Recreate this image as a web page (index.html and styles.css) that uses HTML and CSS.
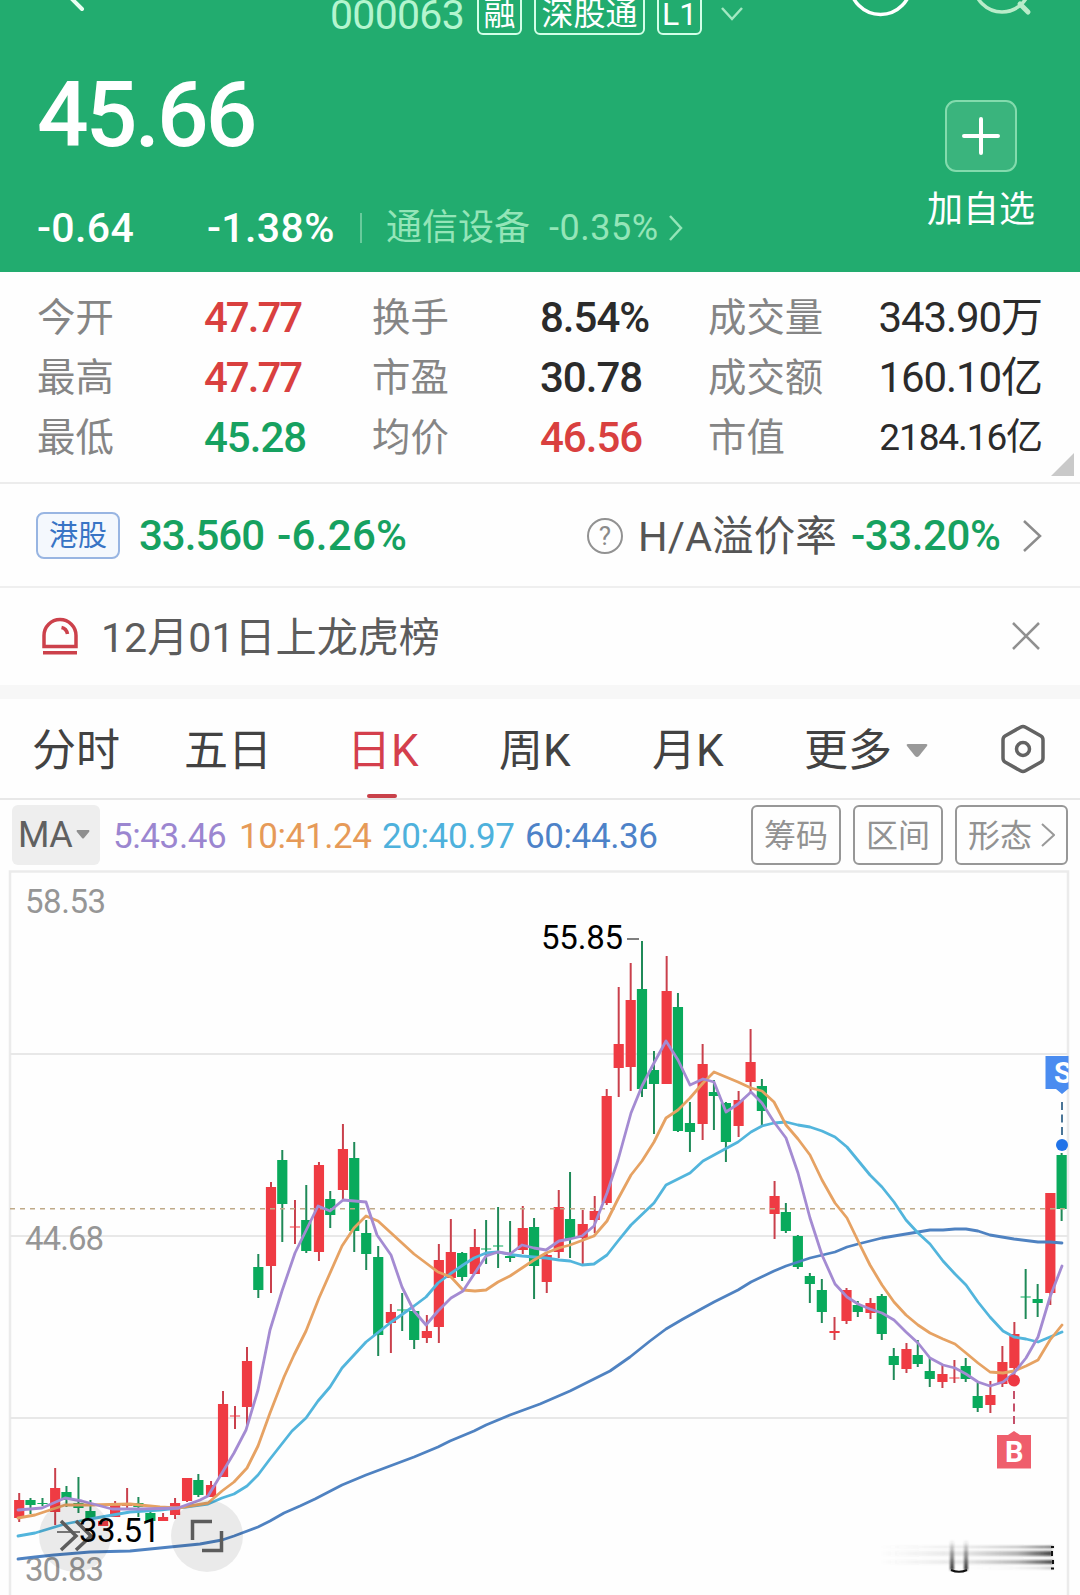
FILE: index.html
```html
<!DOCTYPE html>
<html lang="zh-CN">
<head>
    <meta charset="UTF-8">
    <meta name="viewport" content="width=device-width, initial-scale=1.0">
    <title>000063</title>
    <link rel="stylesheet" href="styles.css">
</head>
<body>
    <header class="header">
        <div class="topbar">
            <svg class="back" width="40" height="46" viewBox="60 -8 40 46"><path d="M66-7L82 9"/></svg>
            <span class="code">000063</span>
            <span class="badge">融</span>
            <span class="badge badge-wide">深股通</span>
            <span class="badge">L1</span>
            <svg class="drop" width="24" height="16" viewBox="0 0 24 16"><path d="M2 2L12 13L22 2"/></svg>
            <svg class="actions" width="190" height="46" viewBox="845 -8 190 46">
                <circle cx="881.5" cy="-16" r="30.5" stroke="#fff"/>
                <g stroke="#b9ecc9"><circle cx="1003" cy="-16" r="28"/><path d="M1021 4L1029 12" stroke-width="5"/></g>
            </svg>
        </div>
        <div class="quote">
            <div class="quote-main">
                <div class="price">45.66</div>
                <div class="change">
                    <span class="diff">-0.64</span>
                    <span class="pct">-1.38%</span>
                    <i class="divider"></i>
                    <span class="sector">通信设备</span>
                    <span class="sector-pct">-0.35%</span>
                    <svg width="16" height="26" viewBox="0 0 16 26"><path d="M2 1L13 13L2 25"/></svg>
                </div>
            </div>
            <div class="add">
                <div class="add-box">
                    <svg width="40" height="40" viewBox="0 0 40 40"><path d="M20 3V37M3 20H37"/></svg>
                </div>
                <span>加自选</span>
            </div>
        </div>
    </header>

    <section class="stats">
        <span class="label">今开</span><span class="val up tight">47.77</span>
        <span class="label">换手</span><span class="val">8.54%</span>
        <span class="label">成交量</span><span class="val right">343.90万</span>
        <span class="label">最高</span><span class="val up tight">47.77</span>
        <span class="label">市盈</span><span class="val">30.78</span>
        <span class="label">成交额</span><span class="val right">160.10亿</span>
        <span class="label">最低</span><span class="val down">45.28</span>
        <span class="label">均价</span><span class="val up">46.56</span>
        <span class="label">市值</span><span class="val right small">2184.16亿</span>
        <i class="corner"></i>
    </section>

    <section class="hk">
        <span class="hk-tag">港股</span>
        <span class="hk-price">33.560</span>
        <span class="hk-pct">-6.26%</span>
        <span class="help">?</span>
        <span class="premium">H/A溢价率</span>
        <span class="premium-pct">-33.20%</span>
        <svg class="arrow" width="20" height="34" viewBox="0 0 20 34"><path d="M2 2L18 17L2 32"/></svg>
    </section>

    <section class="notice">
        <svg class="siren" width="38" height="38" viewBox="0 0 38 38">
            <path d="M3 29.500V18.500a16 16 0 0 1 32 0V29.500Z"/><path d="M20.500 10.500q5 1 6 6.500M2 35.800H36"/>
        </svg>
        <span class="notice-text">12月01日上龙虎榜</span>
        <svg class="close" width="28" height="28" viewBox="0 0 28 28"><path d="M1 1L27 27M27 1L1 27"/></svg>
    </section>

    <nav class="tabs">
        <span class="tab">分时</span>
        <span class="tab">五日</span>
        <span class="tab active">日K</span>
        <span class="tab">周K</span>
        <span class="tab">月K</span>
        <span class="tab more">更多</span>
        <svg class="caret" width="22" height="14" viewBox="0 0 22 14"><path d="M2 0H20Q22 0 21 2L13 12Q11 14 9 12L1 2Q0 0 2 0Z"/></svg>
        <svg class="setting" width="46" height="50" viewBox="0 0 46 50">
            <path d="M20.500 3.200Q23 1.800 25.500 3.200L41 12Q43 13.200 43 16V34Q43 36.800 41 38L25.500 46.800Q23 48.200 20.500 46.800L5 38Q3 36.800 3 34V16Q3 13.200 5 12Z"/>
            <circle cx="23" cy="25" r="6.500"/>
        </svg>
    </nav>

    <section class="ma-bar">
        <span class="ma-select">MA<svg width="14" height="9" viewBox="0 0 14 9"><path d="M1 0H13Q14 1 13 2L8 8Q7 9 6 8L1 2Q0 1 1 0Z"/></svg></span>
        <span class="ma ma5">5:43.46</span>
        <span class="ma ma10">10:41.24</span>
        <span class="ma ma20">20:40.97</span>
        <span class="ma ma60">60:44.36</span>
        <span class="btn">筹码</span>
        <span class="btn">区间</span>
        <span class="btn btn-wide">形态<svg width="14" height="26" viewBox="0 0 14 26"><path d="M1 2L13 13L1 24"/></svg></span>
    </section>

    <svg class="chart" width="1080" height="725" viewBox="0 870 1080 725">
        <defs>
            <clipPath id="plot"><rect x="10" y="870" width="1058.500" height="725"/></clipPath>
            <linearGradient id="fadeDown" x1="0" y1="0" x2="0" y2="1"><stop offset="0" stop-color="#333" stop-opacity="0"/><stop offset="1" stop-color="#333"/></linearGradient>
            <linearGradient id="fadeRight"><stop offset="0" stop-color="#555" stop-opacity="0"/><stop offset=".5" stop-color="#555" stop-opacity=".15"/><stop offset=".8" stop-color="#444" stop-opacity=".4"/><stop offset="1" stop-color="#333" stop-opacity=".9"/></linearGradient>
            <filter id="soft" x="-10%" y="-30%" width="120%" height="160%"><feGaussianBlur stdDeviation="1.1"/></filter>
        </defs>
        <rect class="frame" x="10" y="871.500" width="1058" height="760"/>
        <path class="grid" d="M10 1054H1068M10 1236H1068M10 1418H1068"/>
        <g class="axis">
            <text x="25" y="913" textLength="81">58.53</text>
            <text x="25" y="1250" textLength="79">44.68</text>
            <text x="25" y="1581" textLength="79">30.83</text>
        </g>
        <g id="candles"></g>
        <path class="last" d="M10 1208.700H1068"/>
        <g id="lines"></g>

        <path class="tick" d="M627 939H639M57 1532H80"/>
        <text class="peak" x="541" y="949" textLength="82">55.85</text>
        <g class="tools">
            <circle cx="75" cy="1536" r="36"/>
            <circle cx="207" cy="1536" r="36"/>
            <path d="M61 1521L76 1536L61 1550M76 1521L91 1536L76 1550"/>
            <path d="M192.500 1540V1521.500H212M202 1550.500H221.500V1531"/>
        </g>
        <text class="peak" x="79" y="1542" textLength="81">33.51</text>

        <!-- buy and sell marks -->
        <g clip-path="url(#plot)">
            <path fill="#4a8cf0" d="M1045.500 1056H1080V1089H1068L1062 1094L1056 1089H1045.500Z"/>
            <text class="mark" x="1054" y="1083">S</text>
        </g>
        <path d="M1062 1102V1138" stroke="#4a7597" stroke-width="2" stroke-dasharray="8 4.500"/>
        <circle cx="1062" cy="1145" r="6" fill="#2173e8"/>
        <path fill="#ef5e6c" d="M997 1435H1008L1014 1431L1020 1435H1031V1468.500H997Z"/>
        <text class="mark" x="1005" y="1462">B</text>
        <path d="M1014 1391V1427" stroke="#c5516a" stroke-width="2" stroke-dasharray="8 4.500"/>
        <circle cx="1014" cy="1380.500" r="6" fill="#ee3843"/>

        <g filter="url(#soft)">
            <rect x="880" y="1551" width="172" height="5" fill="url(#fadeRight)"/>
            <rect x="880" y="1546" width="173" height="2" fill="url(#fadeRight)"/>
            <rect x="880" y="1560" width="173" height="4" fill="url(#fadeRight)"/>
            <rect x="970" y="1567" width="83" height="2" fill="url(#fadeRight)" opacity=".4"/>
            <rect x="950" y="1540" width="4" height="30" fill="url(#fadeDown)"/>
            <rect x="964" y="1540" width="4" height="30" fill="url(#fadeDown)"/>
        </g>
        <path d="M951 1570Q959 1573.500 967 1570M1052 1551V1556M1053 1560V1564" fill="none" stroke="#111" stroke-width="2"/>
        <path d="M1051 1547H1054M1051 1568.500H1054" stroke="#111" stroke-width="2"/>
    </svg>

    <script src="chart.js"></script>
</body>
</html>
```
FILE: styles.css
```css
* {
    box-sizing: border-box;
}

body {
    margin: 0;
    width: 1080px;
    height: 1595px;
    overflow: hidden;
    background: #fefefe;
    color: #2b2b2b;
    font-family: Roboto, "Noto Sans CJK SC", sans-serif;
}

svg {
    display: block;
    flex: none;
    fill: none;
}

span {
    white-space: nowrap;
}

.header {
    height: 271.5px;
    background: #22ac6f;
    color: #fff;
    overflow: hidden;
}

.topbar {
    display: flex;
    align-items: center;
    height: 46px;
    margin-top: -8px;
    padding-left: 60px;
}

.back {
    stroke: #e8fff2;
    stroke-width: 4;
    stroke-linecap: round;
}

.code {
    width: 147px;
    margin-left: 230px;
    color: #b4f5cf;
    font-size: 41px;
    line-height: 44px;
    letter-spacing: -0.7px;
}

.badge {
    flex: none;
    width: 45px;
    height: 42px;
    margin: -2px 12px 0 0;
    border: 2px solid #d3ffe8;
    border-radius: 6px;
    font-size: 32px;
    line-height: 39px;
    text-align: center;
}

.badge-wide {
    width: 111px;
}

.drop {
    margin-left: 6px;
    margin-bottom: 2px;
    stroke: #a3e8c2;
    stroke-width: 2.5;
}

.actions {
    margin-left: 100px;
    stroke-width: 3.5;
    stroke-linecap: round;
}

.quote {
    display: flex;
    justify-content: space-between;
}

.quote-main {
    padding: 31px 0 0 37px;
}

.price {
    height: 92px;
    font-size: 91px;
    font-weight: 500;
    line-height: 92px;
    letter-spacing: -2.9px;
}

.change {
    display: flex;
    align-items: center;
    height: 44px;
    margin-top: 45px;
    font-size: 41px;
    line-height: 44px;
}

.diff {
    width: 170px;
    font-weight: 500;
    letter-spacing: 0.4px;
}

.pct {
    width: 153px;
    font-weight: 500;
    letter-spacing: 0.4px;
}

.divider {
    width: 2px;
    height: 30px;
    margin-right: 24px;
    background: #69cb9c;
}

.sector {
    width: 163px;
    color: #94e5b8;
    font-size: 36px;
}

.sector-pct {
    width: 119px;
    color: #94e5b8;
    font-size: 36px;
    letter-spacing: 0.5px;
}

.change svg {
    stroke: #94e5b8;
    stroke-width: 2.5;
}

.add {
    display: flex;
    flex-direction: column;
    align-items: center;
    width: 198px;
    padding-top: 62px;
    font-size: 36px;
    line-height: 42px;
}

.add-box {
    display: flex;
    align-items: center;
    justify-content: center;
    width: 72px;
    height: 72px;
    margin-bottom: 17px;
    border: 2px solid #83dbad;
    border-radius: 11px;
    background: #3ab47d;
}

.add-box svg {
    stroke: #fff;
    stroke-width: 4;
    stroke-linecap: round;
}

.stats {
    position: relative;
    display: grid;
    grid-template-columns: 167px 168px 168px 168px 130px 204px;
    grid-auto-rows: 60px;
    height: 212px;
    padding: 16px 0 0 37px;
    border-bottom: 2px solid #ececec;
    line-height: 60px;
}

.label {
    color: #858585;
    font-size: 38.4px;
    line-height: 59px;
}

.val {
    font-size: 42px;
    font-weight: 500;
    letter-spacing: -1px;
}

.right {
    text-align: right;
    font-weight: 400;
    letter-spacing: -1.1px;
}

.small {
    font-size: 37px;
}

.tight {
    letter-spacing: -2px;
}

.up {
    color: #d9403f;
}

.down {
    color: #16a160;
}

.corner {
    position: absolute;
    right: 6px;
    bottom: 6px;
    border-left: 23px solid transparent;
    border-bottom: 23px solid #c9c9c9;
}

.hk {
    display: flex;
    align-items: center;
    height: 104px;
    padding: 2px 38px 0 36px;
    border-bottom: 2px solid #efefef;
    font-size: 42px;
    line-height: 50px;
}

.hk-tag {
    width: 84px;
    height: 47px;
    margin-right: 19px;
    border: 2px solid #98b5e2;
    border-radius: 8px;
    background: #f4f8fd;
    color: #3874c5;
    font-size: 29px;
    line-height: 45px;
    text-align: center;
}

.hk-price {
    width: 138px;
    color: #16a160;
    font-weight: 500;
    letter-spacing: -1px;
}

.hk-pct {
    width: 310px;
    color: #16a160;
    font-weight: 500;
    letter-spacing: 0.3px;
}

.help {
    width: 36px;
    height: 36px;
    margin-right: 14px;
    border: 2.5px solid #929292;
    border-radius: 50%;
    color: #8a8a8a;
    font-size: 26px;
    line-height: 32px;
    text-align: center;
}

.premium {
    width: 214px;
    padding: 2px 0 0 1px;
    color: #555;
    font-size: 41.5px;
    letter-spacing: 0.1px;
}

.premium-pct {
    color: #16a160;
    font-weight: 500;
    letter-spacing: -0.4px;
}

.arrow {
    margin-left: auto;
    stroke: #8c8c8c;
    stroke-width: 2.5;
}

.notice {
    display: flex;
    align-items: center;
    height: 111px;
    padding: 0 40px 0 41px;
    border-bottom: 14px solid #f7f7f7;
}

.siren {
    stroke: #cc414b;
    stroke-width: 3.5;
}

.notice-text {
    margin-left: 22px;
    padding-top: 3px;
    color: #5c5c5c;
    font-size: 41.1px;
    line-height: 60px;
}

.close {
    margin-left: auto;
    stroke: #909090;
    stroke-width: 2.5;
}

.tabs {
    display: flex;
    align-items: center;
    height: 101px;
    padding-left: 32px;
    border-bottom: 2px solid #e8e8e8;
    color: #424242;
    font-size: 44px;
    line-height: 105px;
}

.tab {
    width: 152px;
    height: 99px;
}

.tab.active {
    position: relative;
    width: 160px;
    padding-left: 11px;
    color: #d43f4c;
}

.tab.active::after {
    content: "";
    position: absolute;
    left: 31px;
    bottom: 0;
    width: 30px;
    height: 4px;
    border-radius: 2px;
    background: #c9414a;
}

.tab.active + .tab {
    margin-left: 3px;
    margin-right: 1px;
}

.tab.more {
    width: 101px;
}

.caret {
    margin: 5px 72px 0 1px;
    fill: #999;
}

.setting {
    margin-top: 2px;
    stroke: #636363;
    stroke-width: 3.5;
}

.ma-bar {
    display: flex;
    align-items: center;
    height: 70.5px;
    padding: 1px 0 0 12px;
    font-size: 35px;
    line-height: 60px;
}

.ma-select {
    display: flex;
    align-items: center;
    width: 88px;
    height: 60px;
    margin-right: 13px;
    padding-left: 6px;
    border-radius: 6px;
    background: #eee;
    color: #606060;
    font-size: 36px;
    letter-spacing: -0.5px;
}

.ma-select svg {
    margin-left: 4px;
    margin-bottom: 2px;
    fill: #8f8f8f;
}

.ma {
    width: 143px;
    padding-top: 4px;
    letter-spacing: -0.4px;
}

.ma5 {
    width: 126px;
    color: #9b86d0;
}

.ma10 {
    color: #e69a58;
}

.ma20 {
    color: #4eb1dc;
}

.ma60 {
    width: 226px;
    color: #4d82c8;
}

.btn {
    flex: none;
    width: 90px;
    height: 60px;
    margin-right: 12px;
    border: 2px solid #979797;
    border-radius: 6px;
    color: #929292;
    font-size: 32px;
    line-height: 58px;
    text-align: center;
}

.btn-wide {
    display: flex;
    justify-content: space-between;
    width: 113px;
    padding: 0 11px;
}

.btn svg {
    margin-top: 15px;
    stroke: #999;
    stroke-width: 2;
}

.frame {
    stroke: #ebebeb;
    stroke-width: 2.5;
}

.grid {
    stroke: #e8e8e8;
    stroke-width: 2;
}

.axis {
    fill: #969696;
    font-size: 33px;
}

.last {
    stroke: #bfa987;
    stroke-width: 1.6;
    stroke-dasharray: 5 5;
}

.peak {
    fill: #000;
    font-size: 33px;
}

.tick {
    stroke: #555;
    stroke-width: 1.6;
}

.tools circle {
    fill: rgba(0, 0, 0, 0.08);
}

.tools path {
    stroke: #5c5c5c;
    stroke-width: 3.5;
}

.mark {
    fill: #fff;
    font-size: 29px;
    font-weight: 700;
}

.ma-line {
    stroke-width: 2.8;
    stroke-linejoin: round;
    stroke-linecap: round;
}
```
FILE: chart.js
```js
// each candle: color, high, body top, body bottom, low
const candles = [
    ['r', 1493, 1500, 1518, 1522], ['g', 1498, 1500, 1505, 1514], ['g', 1498, 1503, 1504, 1506],
    ['r', 1468, 1488, 1512, 1525], ['g', 1486, 1492, 1500, 1507], ['g', 1477, 1503, 1508, 1513],
    ['g', 1500, 1511, 1519, 1521], ['r', 1521, 1521, 1526, 1526], ['r', 1501, 1505, 1517, 1517],
    ['r', 1488, 1505, 1506, 1508], ['g', 1497, 1503, 1507, 1517], ['g', 1512, 1513, 1521, 1521],
    ['r', 1513, 1517, 1521, 1521], ['r', 1498, 1503, 1515, 1519], ['r', 1478, 1478, 1501, 1502],
    ['g', 1474, 1480, 1495, 1497], ['r', 1481, 1485, 1497, 1497], ['r', 1391, 1404, 1477, 1477],
    ['r', 1406, 1415.5, 1416.5, 1429], ['r', 1347, 1361, 1407, 1425], ['g', 1254, 1267, 1290, 1298],
    ['r', 1182, 1187, 1266, 1293], ['g', 1150, 1160, 1204, 1242], ['r', 1200, 1226.5, 1227.5, 1244],
    ['g', 1185, 1220, 1251, 1253], ['r', 1162, 1165, 1252, 1261], ['g', 1191, 1199, 1215, 1228],
    ['r', 1124, 1149, 1190, 1199], ['g', 1142, 1158, 1231, 1252], ['g', 1220, 1233, 1254, 1270],
    ['g', 1246, 1257, 1335, 1356], ['r', 1304, 1312, 1323, 1353], ['g', 1293, 1309.5, 1310.5, 1331],
    ['g', 1310, 1311, 1340, 1349], ['r', 1315, 1331, 1338, 1343], ['r', 1244, 1260, 1327, 1343],
    ['r', 1219, 1252, 1278, 1278], ['g', 1252, 1253, 1277, 1281], ['r', 1229, 1247, 1274, 1274],
    ['g', 1220, 1248.5, 1249.5, 1264], ['g', 1207, 1245.5, 1246.5, 1268], ['g', 1221, 1256, 1258, 1262],
    ['r', 1206, 1228, 1250, 1254], ['g', 1218, 1227, 1266, 1299], ['r', 1254, 1255, 1282, 1293],
    ['r', 1190, 1207, 1252, 1258], ['g', 1172, 1219, 1239, 1258], ['r', 1210, 1224, 1238, 1264],
    ['r', 1196, 1211, 1220, 1233], ['r', 1089, 1096, 1203, 1205], ['r', 987, 1044, 1068, 1097],
    ['r', 963, 1000, 1067, 1091], ['g', 941, 989, 1089, 1097], ['g', 1051, 1070, 1084, 1134],
    ['r', 956, 991, 1084, 1084], ['g', 993, 1007, 1131, 1132], ['g', 1102, 1123, 1132, 1152],
    ['r', 1044, 1064, 1124, 1140], ['g', 1080, 1092, 1096, 1130], ['g', 1102, 1103, 1142, 1162],
    ['r', 1091, 1100, 1126, 1137], ['r', 1029, 1062, 1082, 1092], ['g', 1079, 1086, 1111, 1125],
    ['r', 1181, 1196, 1214, 1239], ['g', 1203, 1212, 1231, 1233], ['g', 1235, 1236, 1267, 1269],
    ['g', 1273, 1276, 1284, 1303], ['g', 1279, 1290, 1312, 1323], ['r', 1317, 1331, 1333, 1340],
    ['r', 1288, 1290, 1321, 1324], ['g', 1301, 1305, 1312, 1317], ['r', 1298, 1303, 1313, 1319],
    ['g', 1294, 1296, 1334, 1340], ['g', 1348, 1356, 1365, 1380], ['r', 1343, 1349, 1369, 1373],
    ['g', 1340, 1355, 1364, 1367], ['g', 1358, 1371, 1379, 1387], ['r', 1365, 1374, 1382, 1388],
    ['r', 1360, 1377.5, 1378.5, 1383], ['g', 1358, 1366, 1379, 1382], ['g', 1383, 1396, 1408, 1412],
    ['r', 1381, 1395, 1405, 1413], ['r', 1346, 1362, 1384, 1387], ['r', 1322, 1334, 1368, 1376],
    ['g', 1269, 1296.5, 1297.5, 1319], ['g', 1284, 1299, 1303, 1317], ['r', 1193, 1193, 1293, 1305],
    ['g', 1153, 1155, 1209, 1221]
];

const lines = {
    '#4f82c1': '18,1559 35,1557 54,1555 90,1552 130,1551 160,1548 200,1544 222,1540 234,1536 258,1527 270,1521 284,1513 300,1506 315,1499 342,1485 366,1475 390,1466 414,1457 438,1447 450,1441 474,1431 486,1425 510,1415 540,1404 570,1391 594,1379 610,1371 630,1357 650,1341 666,1329 683,1319 703,1308 714,1302 738,1290 751,1282 774,1271 786,1266 798,1262 810,1258 835,1252 847,1247 858,1244 870,1241 882,1238 900,1235 918,1232 930,1230 943,1230 955,1229 966,1229 978,1231 990,1235 1014,1239 1038,1242 1050,1242 1062,1243',
    '#52b5dc': '18,1536 35,1533 65,1524 90,1519 130,1512 160,1510 178,1508 208,1504 222,1498 234,1494 247,1486 258,1475 270,1459 292,1431 306,1418 318,1401 330,1387 342,1368 366,1342 390,1323 414,1306 426,1297 438,1283 450,1274 463,1265 474,1258 486,1253 498,1252 510,1254.5 522,1256 534,1257 546,1258 559,1260 570,1261 582,1265 594,1264 607,1255 618,1241 631,1225 654,1203 666,1185 690,1173 703,1161 714,1155 738,1142 751,1132 762,1126 774,1123 786,1122 798,1125 810,1127 822,1131 835,1137 847,1147 870,1175 882,1187 894,1202 906,1220 918,1233 930,1244 943,1261 955,1274 966,1285 978,1302 990,1317 1003,1331 1014,1337 1026,1339 1038,1342 1050,1337 1062,1332',
    '#e6a263': '18,1518 35,1515 65,1505 90,1505 130,1504 160,1507 178,1508 208,1503 222,1491 234,1482 247,1468 258,1446 270,1413 284,1377 294,1355 306,1331 319,1298 342,1246 354,1228 366,1216 378,1221 414,1254 426,1263 438,1272 451,1277 463,1290 475,1291 486,1290 498,1282 510,1276 522,1268 534,1260 546,1253 559,1248 570,1245 594,1236 607,1221 618,1199 631,1175 642,1161 654,1142 666,1118 678,1110 690,1098 703,1083 714,1072 726,1077 738,1082 751,1088 762,1091 774,1102 786,1125 798,1139 810,1155 822,1180 835,1203 847,1218 860,1245 870,1265 882,1285 894,1302 906,1315 918,1325 930,1333 943,1339 955,1344 966,1353 978,1363 990,1372 1003,1373 1014,1371 1026,1366 1038,1360 1050,1340 1062,1325',
    '#a48bd2': '18,1510 42,1508 65,1498 82,1501 112,1509 140,1509 160,1508.500 178,1508 200,1500 208,1496 222,1473 234,1453 246,1430 258,1390 270,1330 282,1291 295,1253 318,1206 330,1211 343,1200 366,1202 377,1235 391,1255 402,1287 414,1311 426,1325 438,1311 451,1298 463,1291 486,1256 498,1252 510,1254 522,1245 534,1248 546,1250 559,1241 570,1239 582,1236 594,1226 607,1193 618,1160 631,1113 642,1086 654,1063 666,1041 678,1060 690,1085 703,1079 714,1082 726,1112 738,1104 751,1092 762,1103 774,1122 786,1138 798,1173 810,1218 822,1255 835,1284 847,1297 858,1304 870,1309 882,1313 894,1320 906,1332 918,1343 930,1358 943,1365 955,1368 966,1374 978,1382 990,1386 1003,1382 1014,1373 1026,1358 1038,1337 1050,1297 1062,1266'
};

const colors = { r: ['#ef3b43', '#c9404c'], g: ['#09aa5c', '#1f8a58'] };

document.getElementById('candles').innerHTML = candles.map(([c, high, top, bottom, low], i) => {
    // green bodies sit slightly left of the red ones
    const x = 18.7 + i * 11.99 + (c === 'g' ? -0.2 : 0.5);
    const [body, wick] = colors[c];
    return `<path d="M${x} ${high}V${low}" stroke="${wick}" stroke-width="2"/>` +
        `<rect x="${x - 5.1}" y="${top}" width="10.2" height="${bottom - top}" fill="${body}"/>`;
}).join('');

document.getElementById('lines').innerHTML = Object.entries(lines).map(([color, points]) =>
    `<polyline class="ma-line" points="${points}" stroke="${color}"/>`
).join('');
```
